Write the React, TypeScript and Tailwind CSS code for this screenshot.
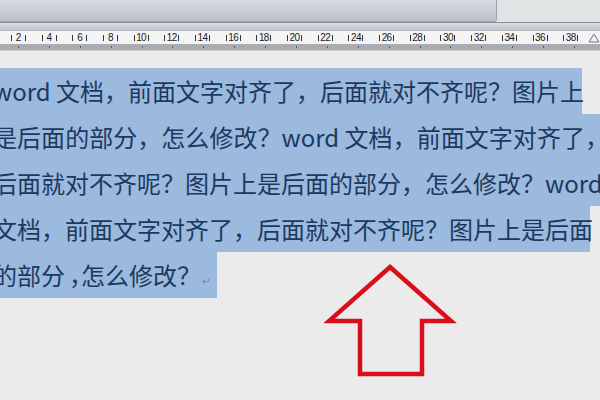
import React from "react";

const rulerNumbers = [2, 4, 6, 8, 10, 12, 14, 16, 18, 20, 22, 24, 26, 28, 30, 32, 34, 36, 38];

type Line = { text: string; width: number };

const justified: Line[] = [
  { text: "word 文档，前面文字对齐了，后面就对不齐呢？图片上", width: 589 },
  { text: "是后面的部分，怎么修改？word 文档，前面文字对齐了，", width: 616 },
  { text: "后面就对不齐呢？图片上是后面的部分，怎么修改？word", width: 608 },
  { text: "文档，前面文字对齐了，后面就对不齐呢？图片上是后面", width: 597 },
];

function Ruler() {
  return (
    <div>
      <div className="h-[13px] bg-[#f4f4f4] flex items-center pl-[3px] font-['Liberation_Sans',sans-serif] text-[10px] leading-none text-[#1a1a1a]">
        {rulerNumbers.map((n) => (
          <div key={n} className="w-[30.9px] flex justify-center">
            <div className="w-[15px] flex items-center justify-between">
              <span className="w-px h-[6px] bg-[#333]" />
              <span className="tracking-[-0.6px]">{n}</span>
              <span className="w-px h-[6px] bg-[#333]" />
            </div>
          </div>
        ))}
        <svg width="12" height="11" viewBox="0 0 12 11" className="ml-[2px]">
          <path d="M1 10 L6 2 L11 10 Z" fill="#f4f4f4" stroke="#6b6f76" strokeWidth="1" />
        </svg>
      </div>
      <div className="h-[6px] bg-[#a9acb2] flex items-center pl-[3px]">
        {rulerNumbers.map((n) => (
          <div key={n} className="w-[30.9px] flex justify-center">
            <span className="w-px h-[2px] bg-[#5c5f64]" />
          </div>
        ))}
      </div>
    </div>
  );
}

export default function App() {
  return (
    <div className="relative w-[600px] h-[400px] overflow-hidden bg-[#ebebeb]">
      {/* window chrome above the ruler */}
      <div className="flex h-[22px]">
        <div className="w-[497px] bg-gradient-to-b from-[#d7dbe3] to-[#babfc9] border-r border-b border-[#9aa0a8] rounded-br-[3px]" />
        <div className="flex-1 bg-[#dfe4e5]" />
      </div>
      <div className="h-px bg-[#8a8e95]" />
      <div className="h-[8px] bg-gradient-to-b from-[#d9dce1] to-[#c2c5cb] border-b border-[#b3b6bc]" />
      <Ruler />
      <div className="h-px bg-[#c9cacc]" />

      {/* selected paragraph */}
      <div className="pt-[17px] ml-[-7px] font-['Noto_Sans_CJK_SC','Noto_Sans',sans-serif] text-[24px] text-[#1b3960]">
        {justified.map((l, i) => (
          <div
            key={i}
            className="h-[46px] leading-[46px] bg-[#9bbade] whitespace-nowrap text-justify [text-align-last:justify]"
            style={{ width: l.width }}
          >
            {l.text}
          </div>
        ))}
        <div className="h-[46px] leading-[46px]">
          <span className="inline-block h-[46px] bg-[#9bbade] pr-[6px] whitespace-nowrap">
            的部分
            <span className="inline-block align-top h-[46px] w-[16px] pl-[4px] overflow-hidden">，</span>
            怎么修改？
            <span className="text-[11px] text-[#7d8ea6] ml-[1px]">↵</span>
          </span>
        </div>
      </div>

      {/* red outline arrow annotation */}
      <svg
        className="absolute left-[324px] top-[262px]"
        width="134"
        height="118"
        viewBox="324 262 134 118"
      >
        <polygon
          points="390,267 451,321 422,321 422,374 360,374 360,321 329,321"
          fill="none"
          stroke="#d90f1c"
          strokeWidth="4.5"
          strokeLinejoin="miter"
        />
      </svg>
    </div>
  );
}
